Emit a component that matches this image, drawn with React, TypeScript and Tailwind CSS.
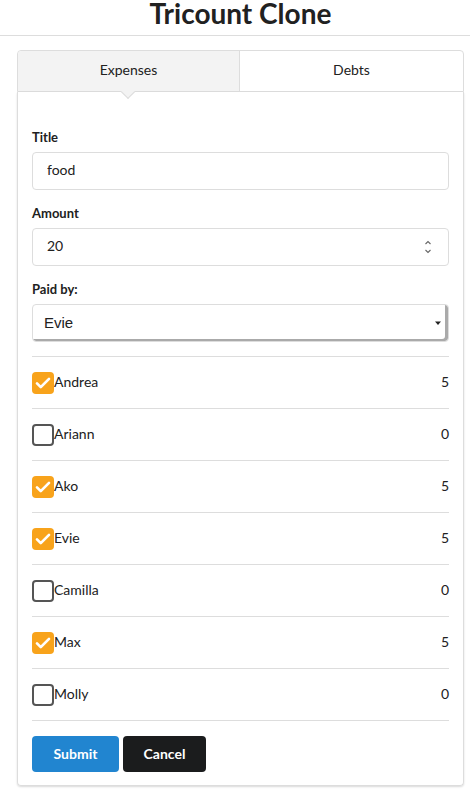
import {useState} from 'react';

const people = [
  {name: 'Andrea', checked: true, share: 5},
  {name: 'Ariann', checked: false, share: 0},
  {name: 'Ako', checked: true, share: 5},
  {name: 'Evie', checked: true, share: 5},
  {name: 'Camilla', checked: false, share: 0},
  {name: 'Max', checked: true, share: 5},
  {name: 'Molly', checked: false, share: 0},
];

function Check({on}: {on: boolean}) {
  if (on) {
    return (
      <span className="w-[22px] h-[22px] rounded-[4px] bg-[#f8a31b] flex items-center justify-center">
        <svg width="18" height="18" viewBox="0 0 24 24" fill="none">
          <path d="M4 12.5l5 5L20 6.5" stroke="white" strokeWidth="3.6" strokeLinecap="round" strokeLinejoin="round" />
        </svg>
      </span>
    );
  }
  return <span className="w-[22px] h-[22px] rounded-[4px] border-2 border-[#555]" />;
}

export default function App() {
  const [tab, setTab] = useState('expenses');

  return (
    <div className="font-['Lato','Liberation_Sans',sans-serif] text-[#212121] bg-white min-h-[790px]">
      <h1 className="text-[28px] font-bold text-center leading-[26px] pl-[11px] pb-[9px] border-b border-[#ddd]">
        Tricount Clone
      </h1>

      <div className="ml-[17px] mr-[6px] mt-[14px]">
        {/* tabs */}
        <div className="flex border border-[#ddd] rounded-t-[4px] h-[42px] text-[14px]">
          <button
            onClick={() => setTab('expenses')}
            className="relative w-[222px] bg-[#f3f3f3] border-r border-[#ddd] rounded-tl-[4px] pb-[3px]"
          >
            Expenses
            <span className="absolute left-[105px] -bottom-[6px] w-[10px] h-[10px] bg-[#f3f3f3] border-r border-b border-[#ddd] rotate-45" />
          </button>
          <button onClick={() => setTab('debts')} className="flex-1 pb-[3px]">
            Debts
          </button>
        </div>

        {/* card */}
        <div className="border border-t-0 border-[#ddd] rounded-b-[4px] shadow-[0_1px_2px_rgba(0,0,0,0.15)] px-[14px] pt-[37px] pb-[13px]">
          <label className="block text-[13px] font-bold mb-[7px] leading-[16px]">Title</label>
          <input
            defaultValue="food"
            className="w-full h-[38px] border border-[#ddd] rounded-[4px] px-[14px] pb-[3px] text-[14px] outline-none"
          />

          <label className="block text-[13px] font-bold mt-[15px] mb-[7px] leading-[16px]">Amount</label>
          <div className="flex items-center w-full h-[38px] border border-[#ddd] rounded-[4px] pl-[14px] pr-[16px] text-[14px]">
            <span className="flex-1 pb-[3px]">20</span>
            <svg width="8" height="16" viewBox="0 0 8 16" fill="none" stroke="#666" strokeWidth="1.1">
              <path d="M1.5 5l2.5-2.5L6.5 5" />
              <path d="M1.5 11l2.5 2.5L6.5 11" />
            </svg>
          </div>

          <label className="block text-[13px] font-bold mt-[15px] mb-[7px] leading-[16px]">Paid by:</label>
          <div className="flex items-center w-full h-[38px] border border-[#ddd] rounded-[4px] pl-[11px] text-[15px] font-['Liberation_Sans',sans-serif] shadow-[inset_-3px_-2px_0_#aaa]">
            <span className="flex-1">Evie</span>
            <svg width="12" height="10" viewBox="0 0 12 10" className="mr-[3px]">
              <path d="M2 3.5h6L5 7z" fill="#222" />
            </svg>
          </div>

          <div className="mt-[14px] border-t border-[#ddd]">
            {people.map(p => (
              <div key={p.name} className="flex items-center h-[52px] border-b border-[#ddd] text-[14px]">
                <Check on={p.checked} />
                <span className="flex-1 pb-[3px]">{p.name}</span>
                <span className="pb-[3px]">{p.share}</span>
              </div>
            ))}
          </div>

          <div className="flex gap-[4px] mt-[15px]">
            <button className="h-[36px] w-[87px] rounded-[4px] bg-[#2185d0] text-white text-[14px] font-bold pb-[1px]">
              Submit
            </button>
            <button className="h-[36px] w-[83px] rounded-[4px] bg-[#1b1c1d] text-white text-[14px] font-bold pb-[1px]">
              Cancel
            </button>
          </div>
        </div>
      </div>
    </div>
  );
}
